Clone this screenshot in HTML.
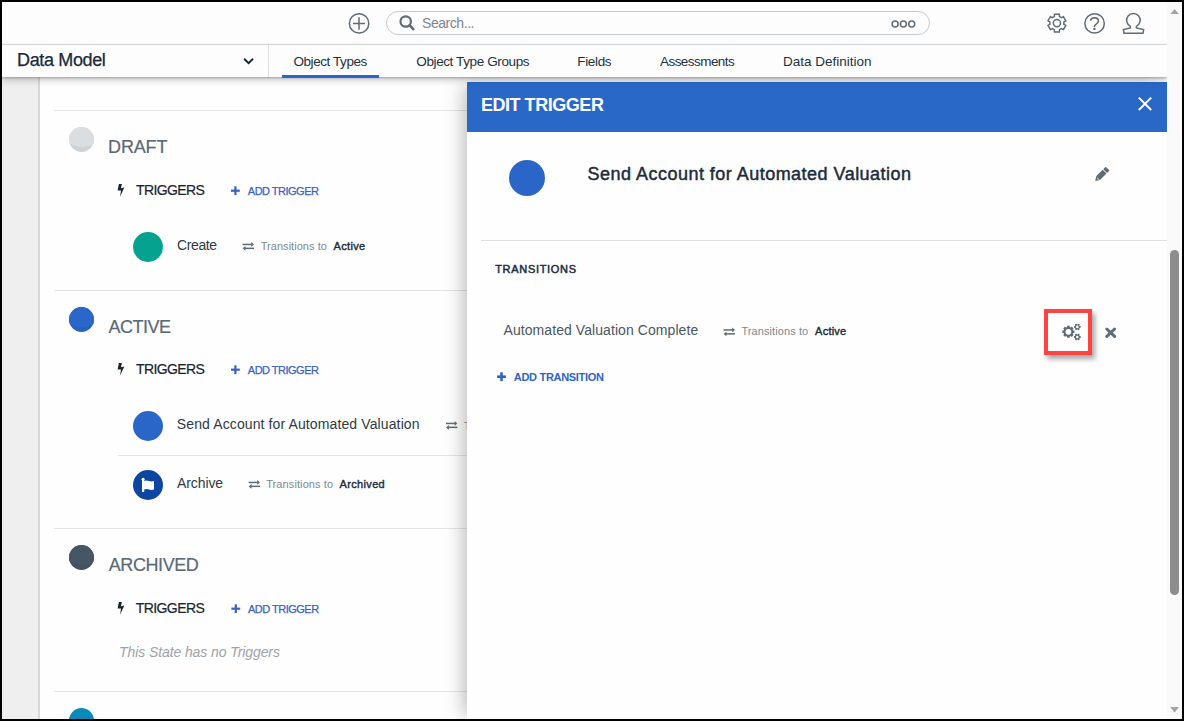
<!DOCTYPE html>
<html><head><meta charset="utf-8"><style>
*{box-sizing:border-box}
html,body{margin:0;padding:0;width:1184px;height:721px;overflow:hidden;background:#000}
body{position:relative;font-family:"Liberation Sans", sans-serif}
.abs{position:absolute;left:0;top:0}
.t{position:absolute;white-space:nowrap}
.r{position:absolute}
.circ{position:absolute;border-radius:50%;overflow:hidden}
.circ i{position:absolute;left:-11.5px;top:-28.5px;width:48px;height:48px;border-radius:50%}
</style></head><body>
<div class="r" style="left:2px;top:2px;width:1180px;height:717px;background:#fefefe;overflow:hidden">
</div>
<!-- left gray column -->
<div class="r" style="left:2px;top:77px;width:36px;height:642px;background:#efefef"></div>
<div class="r" style="left:38px;top:77px;width:2px;height:642px;background:#d6d9dc"></div>
<!-- separators -->
<div class="r" style="left:54px;top:110px;width:1113px;height:1px;background:#e1e4e6"></div>
<div class="r" style="left:54px;top:290px;width:1113px;height:1px;background:#e1e4e6"></div>
<div class="r" style="left:118px;top:455px;width:1049px;height:1px;background:#e1e4e6"></div>
<div class="r" style="left:54px;top:528px;width:1113px;height:1px;background:#e1e4e6"></div>
<div class="r" style="left:54px;top:691px;width:1113px;height:1px;background:#e1e4e6"></div>
<!-- state circles -->
<div class="circ" style="left:69px;top:127px;width:25px;height:25px;background:#ced2d5"><i style="background:#dadee1"></i></div>
<div class="circ" style="left:69px;top:307px;width:25px;height:25px;background:#2562c2"><i style="background:#2a67c9"></i></div>
<div class="circ" style="left:69px;top:545px;width:25px;height:25px;background:#43525f"><i style="background:#475664"></i></div>
<div class="circ" style="left:69px;top:708px;width:25px;height:25px;background:#0a8ab8"></div>
<!-- trigger circles -->
<div class="circ" style="left:133px;top:232px;width:30px;height:30px;background:#04a28f"></div>
<div class="circ" style="left:133px;top:411px;width:30px;height:30px;background:#2a66c8"></div>
<div class="circ" style="left:133px;top:470px;width:30px;height:30px;background:#0c46a0"></div>
<div class="t" style="left:108.10px;top:138px;font-size:18px;line-height:18px;font-weight:400;font-style:normal;color:#5b6976;letter-spacing:-0.175px;-webkit-text-stroke:0.2px #5b6976;">DRAFT</div>
<div class="t" style="left:136.00px;top:183px;font-size:14px;line-height:14px;font-weight:400;font-style:normal;color:#19232e;letter-spacing:-0.626px;-webkit-text-stroke:0.2px #19232e;">TRIGGERS</div>
<div class="t" style="left:247.80px;top:186px;font-size:11px;line-height:11px;font-weight:400;font-style:normal;color:#3762c2;letter-spacing:-0.505px;-webkit-text-stroke:0.25px #3762c2;">ADD TRIGGER</div>
<div class="t" style="left:177.10px;top:238px;font-size:14px;line-height:14px;font-weight:400;font-style:normal;color:#2f3a44;letter-spacing:-0.407px;">Create</div>
<div class="t" style="left:260.70px;top:241px;font-size:11px;line-height:11px;font-weight:400;font-style:normal;color:#7d8892;letter-spacing:0.046px;">Transitions to</div>
<div class="t" style="left:333.50px;top:241px;font-size:11px;line-height:11px;font-weight:400;font-style:normal;color:#1e2c39;letter-spacing:0.353px;-webkit-text-stroke:0.4px #1e2c39;">Active</div>
<div class="t" style="left:108.50px;top:318px;font-size:18px;line-height:18px;font-weight:400;font-style:normal;color:#5b6976;letter-spacing:-0.521px;-webkit-text-stroke:0.2px #5b6976;">ACTIVE</div>
<div class="t" style="left:136.00px;top:362px;font-size:14px;line-height:14px;font-weight:400;font-style:normal;color:#19232e;letter-spacing:-0.626px;-webkit-text-stroke:0.2px #19232e;">TRIGGERS</div>
<div class="t" style="left:247.80px;top:365px;font-size:11px;line-height:11px;font-weight:400;font-style:normal;color:#3762c2;letter-spacing:-0.505px;-webkit-text-stroke:0.25px #3762c2;">ADD TRIGGER</div>
<div class="t" style="left:176.80px;top:417px;font-size:14px;line-height:14px;font-weight:400;font-style:normal;color:#2f3a44;letter-spacing:0.116px;">Send Account for Automated Valuation</div>
<div class="t" style="left:464.00px;top:421px;font-size:11px;line-height:11px;font-weight:400;font-style:normal;color:#7d8892;letter-spacing:0.046px;">Transitions to</div>
<div class="t" style="left:177.00px;top:476px;font-size:14px;line-height:14px;font-weight:400;font-style:normal;color:#2f3a44;letter-spacing:-0.099px;">Archive</div>
<div class="t" style="left:266.20px;top:479px;font-size:11px;line-height:11px;font-weight:400;font-style:normal;color:#7d8892;letter-spacing:0.100px;">Transitions to</div>
<div class="t" style="left:339.60px;top:479px;font-size:11px;line-height:11px;font-weight:400;font-style:normal;color:#1e2c39;letter-spacing:0.332px;-webkit-text-stroke:0.4px #1e2c39;">Archived</div>
<div class="t" style="left:108.80px;top:556px;font-size:18px;line-height:18px;font-weight:400;font-style:normal;color:#5b6976;letter-spacing:-0.431px;-webkit-text-stroke:0.2px #5b6976;">ARCHIVED</div>
<div class="t" style="left:135.80px;top:601px;font-size:14px;line-height:14px;font-weight:400;font-style:normal;color:#19232e;letter-spacing:-0.597px;-webkit-text-stroke:0.2px #19232e;">TRIGGERS</div>
<div class="t" style="left:248.00px;top:604px;font-size:11px;line-height:11px;font-weight:400;font-style:normal;color:#3762c2;letter-spacing:-0.505px;-webkit-text-stroke:0.25px #3762c2;">ADD TRIGGER</div>
<div class="t" style="left:119.00px;top:645px;font-size:14px;line-height:14px;font-weight:400;font-style:italic;color:#9da3a8;letter-spacing:-0.090px;">This State has no Triggers</div>
<svg class="abs" width="1184" height="721" viewBox="0 0 1184 721">
<polygon points="118.9,184.0 121.9,184.0 120.9,188.2 124.3,187.4 120.1,196.8 121.0,190.4 117.6,190.6" fill="#1b2330"/>
<polygon points="118.9,363.0 121.9,363.0 120.9,367.2 124.3,366.4 120.1,375.8 121.0,369.4 117.6,369.6" fill="#1b2330"/>
<polygon points="118.9,602.0 121.9,602.0 120.9,606.2 124.3,605.4 120.1,614.8 121.0,608.4 117.6,608.6" fill="#1b2330"/>
<rect x="231.0" y="189.6" width="8.8" height="2.2" fill="#3762c2"/><rect x="234.3" y="186.3" width="2.2" height="8.8" fill="#3762c2"/>
<rect x="231.0" y="368.6" width="8.8" height="2.2" fill="#3762c2"/><rect x="234.3" y="365.3" width="2.2" height="8.8" fill="#3762c2"/>
<rect x="231.4" y="607.6" width="8.8" height="2.2" fill="#3762c2"/><rect x="234.7" y="604.3" width="2.2" height="8.8" fill="#3762c2"/>
<g fill="#5f6b75"><rect x="242.6" y="243.7" width="9.5" height="1.5"/><polygon points="251.2,242.1 254.0,244.4 251.2,246.8"/><rect x="244.5" y="247.6" width="9.5" height="1.5"/><polygon points="245.5,246.0 242.6,248.3 245.5,250.7"/></g>
<g fill="#5f6b75"><rect x="446.0" y="422.7" width="9.5" height="1.5"/><polygon points="454.6,421.1 457.4,423.5 454.6,425.8"/><rect x="447.9" y="426.6" width="9.5" height="1.5"/><polygon points="448.9,425.0 446.0,427.4 448.9,429.7"/></g>
<g fill="#5f6b75"><rect x="248.6" y="481.7" width="9.5" height="1.5"/><polygon points="257.2,480.1 260.0,482.5 257.2,484.8"/><rect x="250.5" y="485.6" width="9.5" height="1.5"/><polygon points="251.5,484.0 248.6,486.4 251.5,488.7"/></g>
<!-- flag -->
<rect x="142" y="479" width="2.2" height="13" fill="#fff"/>
<circle cx="143.1" cy="479.3" r="1.5" fill="#fff"/>
<path d="M144 481 Q147 480.2 149 481 Q151.5 481.8 154 481 L154 489.5 Q151.5 490.3 149 489.5 Q147 488.7 144 489.5 Z" fill="#fff"/>
</svg>
<!-- panel -->
<div class="r" style="left:467px;top:82px;width:700px;height:637px;background:#fefefe;box-shadow:-8px 0 17px -4px rgba(0,0,0,0.25)"></div>
<div class="r" style="left:467px;top:82px;width:700px;height:50px;background:#2a68c8"></div>
<div class="circ" style="left:509px;top:160px;width:36px;height:36px;background:#2a66c8"></div>
<div class="r" style="left:481px;top:240px;width:686px;height:1px;background:#dfe2e5"></div>
<div class="r" style="left:1044px;top:309px;width:48px;height:46px;border:4px solid #ff4343;box-shadow:3px 4px 5px rgba(0,0,0,0.35)"></div>
<div class="t" style="left:480.90px;top:96px;font-size:18px;line-height:18px;font-weight:700;font-style:normal;color:#ffffff;letter-spacing:-0.455px;">EDIT TRIGGER</div>
<div class="t" style="left:587.60px;top:165px;font-size:18px;line-height:18px;font-weight:400;font-style:normal;color:#1b2b3b;letter-spacing:0.473px;-webkit-text-stroke:0.45px #1b2b3b;">Send Account for Automated Valuation</div>
<div class="t" style="left:495.20px;top:264px;font-size:11px;line-height:11px;font-weight:400;font-style:normal;color:#1e2f3e;letter-spacing:0.689px;-webkit-text-stroke:0.5px #1e2f3e;">TRANSITIONS</div>
<div class="t" style="left:503.50px;top:323px;font-size:14px;line-height:14px;font-weight:400;font-style:normal;color:#4c5661;letter-spacing:0.072px;">Automated Valuation Complete</div>
<div class="t" style="left:741.40px;top:326px;font-size:11px;line-height:11px;font-weight:400;font-style:normal;color:#7d8892;letter-spacing:0.092px;">Transitions to</div>
<div class="t" style="left:815.10px;top:326px;font-size:11px;line-height:11px;font-weight:400;font-style:normal;color:#1e2c39;letter-spacing:0.233px;-webkit-text-stroke:0.4px #1e2c39;">Active</div>
<div class="t" style="left:513.80px;top:372px;font-size:11px;line-height:11px;font-weight:700;font-style:normal;color:#2d64c5;letter-spacing:-0.305px;">ADD TRANSITION</div>
<svg class="abs" width="1184" height="721" viewBox="0 0 1184 721">
<g stroke="#fff" stroke-width="2" stroke-linecap="butt">
<line x1="1138.8" y1="97.6" x2="1151.2" y2="110"/>
<line x1="1151.2" y1="97.6" x2="1138.8" y2="110"/>
</g>
<!-- pencil -->
<g transform="translate(1101.6 174.6) rotate(-45)" fill="#5f6b75">
<polygon points="-9,0 -5,-2.7 -5,2.7"/>
<rect x="-5" y="-2.7" width="9.2" height="5.4"/>
<rect x="5" y="-2.7" width="3.5" height="5.4" rx="0.7"/>
</g>
<g transform="translate(1101.6 174.6) rotate(-45)" fill="#fff">
<polygon points="-6.6,0.5 -5.2,-0.5 -5.2,1.6"/>
</g>
<rect x="497.1" y="375.4" width="8.8" height="2.6" fill="#2d64c5"/><rect x="500.2" y="372.3" width="2.6" height="8.8" fill="#2d64c5"/>
<g fill="#5f6b75"><rect x="723.6" y="329.2" width="9.5" height="1.5"/><polygon points="732.2,327.6 735.0,330.0 732.2,332.3"/><rect x="725.5" y="333.1" width="9.5" height="1.5"/><polygon points="726.5,331.5 723.6,333.9 726.5,336.2"/></g>
<path d="M1067.13 327.07 L1067.01 325.76 L1069.79 325.76 L1069.67 327.07 A4.9 4.9 0 0 1 1070.85 327.56 L1070.85 327.56 L1071.69 326.54 L1073.66 328.51 L1072.64 329.35 A4.9 4.9 0 0 1 1073.13 330.53 L1073.13 330.53 L1074.44 330.41 L1074.44 333.19 L1073.13 333.07 A4.9 4.9 0 0 1 1072.64 334.25 L1072.64 334.25 L1073.66 335.09 L1071.69 337.06 L1070.85 336.04 A4.9 4.9 0 0 1 1069.67 336.53 L1069.67 336.53 L1069.79 337.84 L1067.01 337.84 L1067.13 336.53 A4.9 4.9 0 0 1 1065.95 336.04 L1065.95 336.04 L1065.11 337.06 L1063.14 335.09 L1064.16 334.25 A4.9 4.9 0 0 1 1063.67 333.07 L1063.67 333.07 L1062.36 333.19 L1062.36 330.41 L1063.67 330.53 A4.9 4.9 0 0 1 1064.16 329.35 L1064.16 329.35 L1063.14 328.51 L1065.11 326.54 L1065.95 327.56 A4.9 4.9 0 0 1 1067.13 327.07 Z M1065.50 331.80 A2.9 2.9 0 1 0 1071.30 331.80 A2.9 2.9 0 1 0 1065.50 331.80 Z M1077.65 324.42 L1078.15 323.50 L1079.82 324.47 L1079.27 325.36 A2.5 2.5 0 0 1 1079.62 325.96 L1079.62 325.96 L1080.66 325.94 L1080.66 327.86 L1079.62 327.84 A2.5 2.5 0 0 1 1079.27 328.44 L1079.27 328.44 L1079.82 329.33 L1078.15 330.30 L1077.65 329.38 A2.5 2.5 0 0 1 1076.95 329.38 L1076.95 329.38 L1076.45 330.30 L1074.78 329.33 L1075.33 328.44 A2.5 2.5 0 0 1 1074.98 327.84 L1074.98 327.84 L1073.94 327.86 L1073.94 325.94 L1074.98 325.96 A2.5 2.5 0 0 1 1075.33 325.36 L1075.33 325.36 L1074.78 324.47 L1076.45 323.50 L1076.95 324.42 A2.5 2.5 0 0 1 1077.65 324.42 Z M1076.00 326.90 A1.3 1.3 0 1 0 1078.60 326.90 A1.3 1.3 0 1 0 1076.00 326.90 Z M1077.65 334.52 L1078.15 333.60 L1079.82 334.57 L1079.27 335.46 A2.5 2.5 0 0 1 1079.62 336.06 L1079.62 336.06 L1080.66 336.04 L1080.66 337.96 L1079.62 337.94 A2.5 2.5 0 0 1 1079.27 338.54 L1079.27 338.54 L1079.82 339.43 L1078.15 340.40 L1077.65 339.48 A2.5 2.5 0 0 1 1076.95 339.48 L1076.95 339.48 L1076.45 340.40 L1074.78 339.43 L1075.33 338.54 A2.5 2.5 0 0 1 1074.98 337.94 L1074.98 337.94 L1073.94 337.96 L1073.94 336.04 L1074.98 336.06 A2.5 2.5 0 0 1 1075.33 335.46 L1075.33 335.46 L1074.78 334.57 L1076.45 333.60 L1076.95 334.52 A2.5 2.5 0 0 1 1077.65 334.52 Z M1076.00 337.00 A1.3 1.3 0 1 0 1078.60 337.00 A1.3 1.3 0 1 0 1076.00 337.00 Z" fill="#5f6b75" fill-rule="evenodd"/>
<g stroke="#5f6b75" stroke-width="3" stroke-linecap="round">
<line x1="1106.8" y1="329" x2="1114.6" y2="336.4"/>
<line x1="1114.6" y1="329" x2="1106.8" y2="336.4"/>
</g>
</svg>
<!-- header -->
<div class="r" style="left:2px;top:2px;width:1165px;height:43px;background:#fdfdfd;border-bottom:1px solid #dde1e4"></div>
<div class="r" style="left:2px;top:45px;width:1165px;height:32px;background:#fdfdfd;box-shadow:0 1px 2px rgba(0,0,0,0.22),0 3px 7px rgba(0,0,0,0.22)"></div>
<div class="r" style="left:268px;top:45px;width:1px;height:32px;background:#dde1e4"></div>
<div class="r" style="left:282px;top:75px;width:97px;height:3px;background:#2a66c9"></div>
<div class="r" style="left:386px;top:11px;width:544px;height:24px;border:1px solid #c6c9cc;border-radius:12px;background:#fdfdfd"></div>
<div class="t" style="left:17.10px;top:51px;font-size:18px;line-height:18px;font-weight:400;font-style:normal;color:#17293a;letter-spacing:-0.372px;-webkit-text-stroke:0.25px #17293a;">Data Model</div>
<div class="t" style="left:293.40px;top:55px;font-size:13.5px;line-height:13.5px;font-weight:400;font-style:normal;color:#1f3041;letter-spacing:-0.421px;">Object Types</div>
<div class="t" style="left:416.30px;top:55px;font-size:13.5px;line-height:13.5px;font-weight:400;font-style:normal;color:#1f3041;letter-spacing:-0.389px;">Object Type Groups</div>
<div class="t" style="left:577.30px;top:55px;font-size:13.5px;line-height:13.5px;font-weight:400;font-style:normal;color:#1f3041;letter-spacing:-0.352px;">Fields</div>
<div class="t" style="left:660.00px;top:55px;font-size:13.5px;line-height:13.5px;font-weight:400;font-style:normal;color:#1f3041;letter-spacing:-0.552px;">Assessments</div>
<div class="t" style="left:782.90px;top:55px;font-size:13.5px;line-height:13.5px;font-weight:400;font-style:normal;color:#1f3041;letter-spacing:0.004px;">Data Definition</div>
<div class="t" style="left:422.00px;top:16px;font-size:14px;line-height:14px;font-weight:400;font-style:normal;color:#7b858e;letter-spacing:-0.442px;">Search...</div>
<svg class="abs" width="1184" height="721" viewBox="0 0 1184 721">
<!-- chevron -->
<polyline points="244.6,59.3 248.6,63.2 252.6,59.3" fill="none" stroke="#17263a" stroke-width="1.9" stroke-linecap="round"/>
<!-- header icons -->
<g fill="none" stroke="#5f6b75" stroke-width="1.5">
<circle cx="359.1" cy="23.4" r="9.7"/>
<line x1="353" y1="23.5" x2="365" y2="23.5"/>
<line x1="359" y1="17.2" x2="359" y2="29.8"/>
<circle cx="405.7" cy="21.5" r="5.2" stroke-width="2.2"/>
<line x1="409.6" y1="25.4" x2="413.2" y2="29" stroke-width="2.6" stroke-linecap="round"/>
<circle cx="895.1" cy="24.1" r="3.0"/>
<circle cx="903.4" cy="24.1" r="3.0"/>
<circle cx="911.7" cy="24.1" r="3.0"/>
<path transform="translate(1056.9 23.1)" d="M-2.62 -6.49 L-2.38 -8.89 L2.38 -8.89 L2.62 -6.49 A7.0 7.0 0 0 1 4.31 -5.52 L4.31 -5.52 L6.51 -6.51 L8.89 -2.38 L6.93 -0.97 A7.0 7.0 0 0 1 6.93 0.97 L6.93 0.97 L8.89 2.38 L6.51 6.51 L4.31 5.52 A7.0 7.0 0 0 1 2.62 6.49 L2.62 6.49 L2.38 8.89 L-2.38 8.89 L-2.62 6.49 A7.0 7.0 0 0 1 -4.31 5.52 L-4.31 5.52 L-6.51 6.51 L-8.89 2.38 L-6.93 0.97 A7.0 7.0 0 0 1 -6.93 -0.97 L-6.93 -0.97 L-8.89 -2.38 L-6.51 -6.51 L-4.31 -5.52 A7.0 7.0 0 0 1 -2.62 -6.49 Z"/>
<circle cx="1056.9" cy="23.1" r="3.6"/>
<circle cx="1094.6" cy="23.4" r="9.7"/>
<path d="M1090.6 20.6 Q1091 17.8 1094.5 17.7 Q1098.4 17.8 1098.4 21 Q1098.3 23.2 1095.6 24.6 Q1094.4 25.4 1094.4 27" stroke-width="1.6"/>
<path d="M1130.4 26.3 L1130.4 28 L1123.4 29.6 L1124 33.2 L1143 33.2 L1143.6 29.6 L1136.4 28 L1136.4 26.3 A6.8 6.8 0 1 0 1130.4 26.3 Z"/>
</g>
<circle cx="1094.4" cy="28.9" r="1.2" fill="#5f6b75"/>
</svg>
<!-- scrollbar -->
<div class="r" style="left:1167px;top:2px;width:15px;height:717px;background:#fafafa"></div>
<div class="r" style="left:1170px;top:250px;width:9px;height:345px;border-radius:4.5px;background:#8d8d8d"></div>
<svg class="abs" width="1184" height="721"><polygon points="1170.4,14 1174.6,9 1178.8,14" fill="#a3a3a3"/><polygon points="1170.2,707 1174.6,712.5 1179,707" fill="#a3a3a3"/></svg>
<!-- frame border -->
<div class="r" style="left:0;top:0;width:1184px;height:2px;background:#000"></div>
<div class="r" style="left:0;top:719px;width:1184px;height:2px;background:#000"></div>
<div class="r" style="left:0;top:0;width:2px;height:721px;background:#000"></div>
<div class="r" style="left:1182px;top:0;width:2px;height:721px;background:#000"></div>
</body></html>
